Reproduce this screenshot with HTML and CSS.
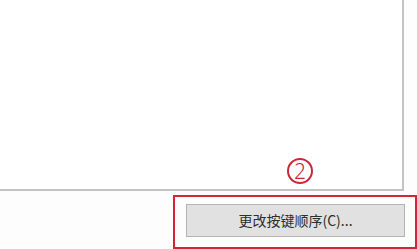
FILE: index.html
```html
<!DOCTYPE html>
<html>
<head>
<meta charset="utf-8">
<link rel="stylesheet" href="styles.css">
</head>
<body>
<div class="page">
  <div class="panel"></div>
  <div class="footer">
    <div class="highlight">
      <button class="btn">更改按键顺序(C)...</button>
    </div>
  </div>
  <div class="marker">2</div>
</div>
</body>
</html>
```
FILE: styles.css
```css
html, body {
  margin: 0;
  padding: 0;
  background: #fdfdfd;
}
.page {
  position: relative;
  width: 417px;
  height: 249px;
  overflow: hidden;
  display: flex;
  flex-direction: column;
}
.panel {
  width: 402px;
  height: 191px;
  background: #ffffff;
  border-right: 2px solid #c4c4c4;
  border-bottom: 2px solid #c4c4c4;
}
.footer {
  margin-top: 4px;
  padding-left: 173px;
  display: flex;
}
.highlight {
  width: 223px;
  height: 37px;
  border: 2px solid #d3243a;
  padding: 7px 9px 6px 11px;
  box-sizing: content-box;
  display: flex;
}
.btn {
  width: 219px;
  height: 33px;
  margin: 0;
  padding: 0;
  background: #e1e1e1;
  border: 1px solid #b4b4b4;
  font-family: "Noto Sans CJK SC", "Noto Sans", sans-serif;
  font-size: 14px;
  color: #2e2e2e;
  text-align: center;
  line-height: 31px;
}
.marker {
  position: absolute;
  left: 287px;
  top: 158px;
  width: 22px;
  height: 22px;
  border: 2px solid #c8283a;
  border-radius: 50%;
  color: #c8283a;
  font-family: "Noto Sans", sans-serif;
  font-weight: 300;
  font-size: 21px;
  line-height: 22px;
  text-align: center;
}
```
